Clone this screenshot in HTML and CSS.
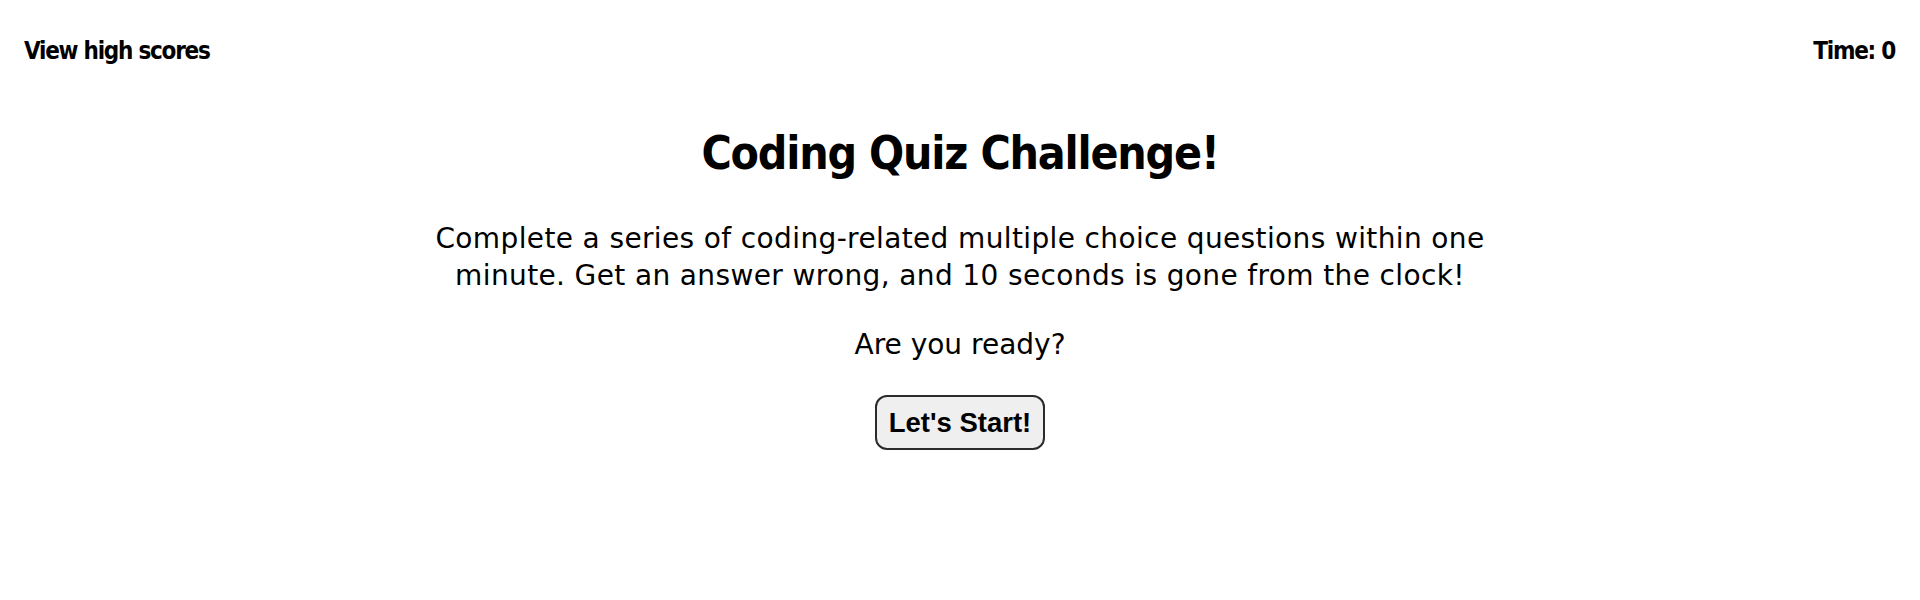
FILE: index.html
```html
<!DOCTYPE html>
<html lang="en">
<head>
<meta charset="utf-8">
<title>Coding Quiz</title>
<link rel="stylesheet" href="styles.css">
</head>
<body>
<header class="topbar">
  <a class="scores-link" href="#">View high scores</a>
  <div class="timer">Time: <span class="time-value">0</span></div>
</header>
<main class="intro">
  <h1 class="title">Coding Quiz Challenge!</h1>
  <p class="desc">Complete a series of coding-related multiple choice questions within one minute. Get an answer wrong, and 10 seconds is gone from the clock!</p>
  <p class="ready">Are you ready?</p>
  <button class="start-btn" type="button">Let's Start!</button>
</main>
</body>
</html>
```

FILE: styles.css
```css
html, body {
  margin: 0;
  padding: 0;
  background: #ffffff;
  color: #000000;
  font-family: "DejaVu Sans", sans-serif;
}

.topbar {
  display: flex;
  justify-content: space-between;
  align-items: flex-start;
  padding: 37px 25px 0 24px;
  font-family: "DejaVu Sans Condensed", "DejaVu Sans", sans-serif;
  font-weight: bold;
  font-size: 24px;
  line-height: 28px;
  letter-spacing: -1.25px;
}

.scores-link {
  color: #000000;
  text-decoration: none;
}

.timer {
  color: #000000;
}

.intro {
  display: flex;
  flex-direction: column;
  align-items: center;
  text-align: center;
  padding-top: 60px;
}

.title {
  margin: 0;
  font-family: "DejaVu Sans Condensed", "DejaVu Sans", sans-serif;
  font-weight: bold;
  font-size: 46px;
  line-height: 56px;
  letter-spacing: -1.2px;
}

.desc {
  margin: 39px 0 0 0;
  max-width: 1120px;
  font-size: 28px;
  line-height: 37px;
  letter-spacing: 0.37px;
}

.ready {
  margin: 32px 0 0 0;
  font-size: 28px;
  line-height: 37px;
}

.start-btn {
  margin-top: 32px;
  padding: 10px 12px;
  font-family: "Liberation Sans", Arial, sans-serif;
  font-weight: bold;
  font-size: 27.5px;
  line-height: 31px;
  color: #000000;
  background: #efefef;
  border: 2px solid #2b2b2b;
  border-radius: 12px;
  cursor: pointer;
}
```
